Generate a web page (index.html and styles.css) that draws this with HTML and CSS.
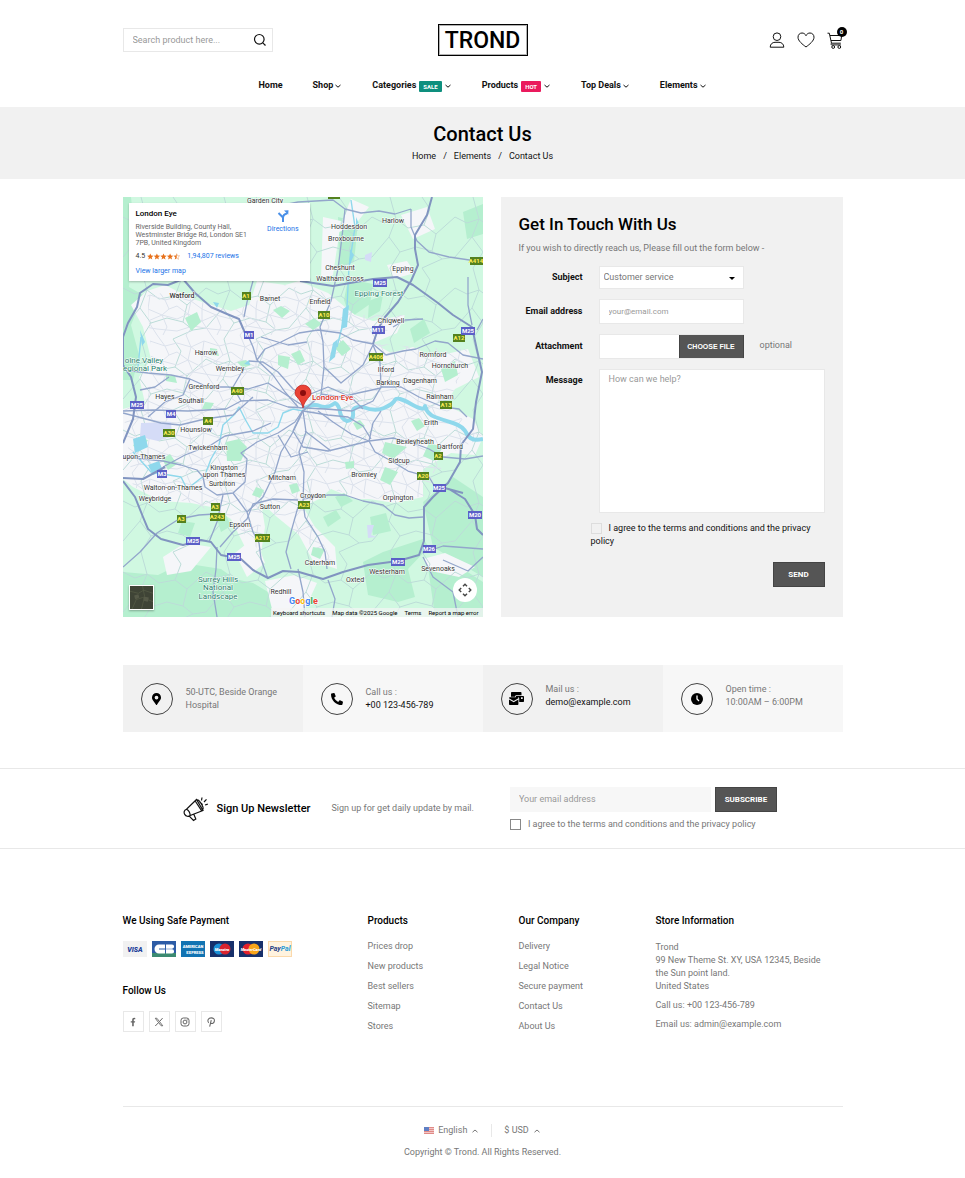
FILE: index.html
```html
<!DOCTYPE html>
<html lang="en">
<head>
    <meta charset="UTF-8">
    <meta name="viewport" content="width=device-width, initial-scale=1.0">
    <title>Contact Us - Trond</title>
    <link rel="stylesheet" href="styles.css">
</head>
<body>
    <!-- shared icons -->
    <svg class="sprite" aria-hidden="true">
        <symbol id="down" viewBox="0 0 8 8"><path d="M1.5 3 4 5.2 6.5 3" fill="none" stroke="currentColor" stroke-width="1"/></symbol>
        <symbol id="up" viewBox="0 0 8 8"><path d="M1.5 5.2 4 3l2.500 2.200" fill="none" stroke="currentColor" stroke-width="1"/></symbol>
    </svg>

    <header class="header">
        <div class="container header-top">
            <form class="search">
                <input type="text" placeholder="Search product here..." aria-label="Search">
                <button type="button" aria-label="Search">
                    <svg viewBox="0 0 14 14" width="14" height="14"><circle cx="6.300" cy="6.300" r="4.800"/><path d="m9.800 9.800 2.700 2.700"/></svg>
                </button>
            </form>
            <a class="logo" href="#">TROND</a>
            <div class="header-icons">
                <a href="#" aria-label="Account">
                    <svg viewBox="0 0 16 16" width="16" height="16"><circle cx="8" cy="4.700" r="3.800"/><path d="M1.200 15.200c0-3.200 2.300-4.900 4.800-4.900h4c2.500 0 4.800 1.700 4.800 4.900z"/></svg>
                </a>
                <a href="#" aria-label="Wishlist">
                    <svg viewBox="0 0 18 16" width="18" height="16"><path d="M9 15C5.500 12.300 1 9 1 5.200 1 2.700 2.800 1 5 1c1.800 0 3.200 1 4 2.700C9.800 2 11.200 1 13 1c2.200 0 4 1.700 4 4.200C17 9 12.500 12.300 9 15z"/></svg>
                </a>
                <a class="cart" href="#" aria-label="Cart">
                    <svg viewBox="0 0 16 17" width="16" height="17"><path d="M.5 1.200h1.800l2.200 10h9.300M3 3.500h11.700l-.8 5H4M4.600 11.200c-1 .6-.7 1.700.2 1.700h9"/><circle cx="6.200" cy="15" r="1.400"/><circle cx="12.300" cy="15" r="1.400"/></svg>
                    <span class="cart-count">0</span>
                </a>
            </div>
        </div>
        <nav class="nav">
            <a href="#">Home</a>
            <a href="#">Shop <svg><use href="#down"/></svg></a>
            <a href="#">Categories <span class="tag sale">SALE</span> <svg><use href="#down"/></svg></a>
            <a href="#">Products <span class="tag hot">HOT</span> <svg><use href="#down"/></svg></a>
            <a href="#">Top Deals <svg><use href="#down"/></svg></a>
            <a href="#">Elements <svg><use href="#down"/></svg></a>
        </nav>
    </header>

    <section class="banner">
        <h1>Contact Us</h1>
        <div class="breadcrumb">
            <a href="#">Home</a><span>/</span><a href="#">Elements</a><span>/</span><span>Contact Us</span>
        </div>
    </section>

    <main class="container">
        <div class="contact">
            <div class="map">
                <svg class="map-canvas" viewBox="0 0 360 420" preserveAspectRatio="xMidYMid slice" role="img" aria-label="Map of London">
                    <defs>
                        <pattern id="streets" width="54" height="46" patternUnits="userSpaceOnUse">
                            <path d="M0 8 14 12 27 6 42 11 54 8M0 30 11 25 25 32 39 26 54 30M9 0 14 12 11 25 16 37 9 46M27 6 25 20 25 32 34 46M42 11 46 20 39 26 44 38 40 46M14 12 25 20 39 26M16 37 25 32M0 42 16 37 34 40 54 42M34 0 42 11M46 20 54 17M0 17 11 25"/>
                        </pattern>
                        <pattern id="lanes" width="83" height="71" patternUnits="userSpaceOnUse">
                            <path d="M0 20 12 26 24 22 36 31 52 28 64 37 83 20M18 0 24 22 17 40 28 55 18 71M52 28 58 12 50 0M64 37 60 54 70 62 50 71M28 55 44 50 60 54M0 60 17 40M70 62 83 60"/>
                        </pattern>
                    </defs>
                    <rect width="360" height="420" fill="#d0f8e1"/>
                    <!-- woodland -->
                    <g fill="#b5efcf">
                        <path d="M0 0h8l3 30-5 60 14 8-12 30 8 30-6 25H0zM225 82l25 5-3 20-20 14-6-18zM215 20l20 5-4 40-15 5z"/>
                        <path d="M0 375 35 378 60 366 98 372 112 382 130 386 150 398 160 420H0zM240 365 260 355 300 342 306 350 285 372 292 400 275 405 245 398zM300 305 330 280 360 300V380L310 350zM305 370 340 372 360 385V420H312zM340 15l20-8v30l-16 5z"/>
                    </g>
                    <!-- built up area -->
                    <path fill="#f5f6f9" d="M24 94 42 88 70 102 108 114 126 108 134 84 162 88 176 84 205 96 222 110 232 118 250 124 282 118 274 136 250 146 268 156 290 150 310 160 345 152 356 180 332 192 322 207 350 222 360 240 352 258 328 256 300 272 300 300 272 306 246 302 232 302 208 292 196 302 180 310 192 330 212 350 214 372 190 364 176 338 154 320 138 305 142 330 138 356 120 370 122 350 108 322 88 310 68 306 38 304 10 290 0 282V212L22 206 16 180 28 162 20 130 8 108z"/>
                    <path fill="#f5f6f9" d="m40 360 22-14 26 4-20 24-24 4zM112 356l20-16 10 26-18 14zM142 384l30-6 22 8-12 26-32 4zM300 362l22-6 30 14-16 10-28-6zM228 2l18 8-14 18-18 8zM278 18l26-8 8 22-22 10zM264 68l20-4 8 12-22 6zM200 20l18 4-8 54-12 4z"/>
                    <rect width="360" height="420" fill="url(#lanes)"/>
                    <path fill="url(#streets)" d="M24 94 70 102 108 114 126 108 162 88 205 96 232 118 282 118 250 146 290 150 345 152 332 192 322 207 360 240 328 256 300 300 246 302 208 292 180 310 214 372 176 338 138 305 138 356 108 322 68 306 10 290 0 212 22 206 28 162z"/>
                    <!-- parks -->
                    <g fill="#b5efcf">
                        <path d="M103 245 116 242 124 250 118 264 104 264zM62 121l12-6 4 10-10 9zM155 158l12 2-2 12-10-4zM150 113l8-4 9 5-8 7zM87 151l7 1 2 7-9-1zM168 157l9-4 5 11-7 4zM39 262l8-5 7 10-9 6zM211 150l9-7 8 9-9 7zM222 265l9-1 0 7-8 1zM262 270l13 5-8 13-10-5zM230 226l7-3 5 6-8 4zM287 132l14-10 6 14-16 10zM246 104l14-6-3 16-12 7zM15 240l10 3-5 9-10-3zM288 224l8-3 6 8-8 5zM200 320l13-7 5 8-13 9zM133 290l8 3-4 8-8-3zM166 288l8-2 3 8-8 3zM114 165l9-2 5 5-8 3zM182 127l9-6 8 6-9 6zM43 178l9 1 2 7-11-2zM82 205l9 1-4 7-8-1zM212 300l9-4 9 8-12 6z"/>
                        <path d="M262 245l22 5-14 12-11-6zM318 172l14-8 3 14-13 7zM306 246l14 4-9 14-11-5zM59 324l13 2-5 14-12-4zM93 319l9-3 6 13-10 6zM190 350l12 2-5 10-9-4zM247 320l16-4 5 18-18 4z"/>
                    </g>
                    <!-- airport and built landmarks -->
                    <path fill="#d5dcf7" d="m18 226 30-1 1 14-14 5-18-4zM242 58l7-3-1 10-6-2zM244 328l7 0-3 10 5 2-8 1z"/>
                    <!-- water -->
                    <g fill="#8fd8ec">
                        <path d="M10 242 22 238 25 250 12 256zM25 268 36 264 40 274 30 278zM220 112 226 108 224 130 218 132zM210 146 215 142 212 160 206 165zM90 105 96 106 94 111zM121 167 126 163 127 168zM17 133l5 12-3 4zM227 52l4 6-5 12zM233 20l3 7-3 4z"/>
                    </g>
                    <path class="water thin" d="M10 255 28 275 58 280 64 292 82 278 88 262 96 248 100 228 112 217 116 210 122 222 130 236 145 236 155 230 160 216 170 212 180 214M228 3 232 30 226 70 224 110 214 150M18 140 15 170"/>
                    <path class="water" d="M180 212Q190 206 197 209T212 206Q216 208 217 215T224 224Q231 223 230 216T240 210Q252 215 261 211T272 203 288 207 302 209Q304 217 312 220T330 226 344 237 360 242"/>
                    <!-- roads -->
                    <g class="road">
                        <path d="M60 70 70 48 95 30 130 14 175 5 210 3 222 12 238 16 256 14 272 17 288 12M222 12 219 40 215 72 208 104 197 130 200 145 201 170 198 198 180 214M288 12 288 30 294 44 306 55 326 60 360 65"/>
                        <path d="M130 84 124 105 121 120M123 134 130 150 134 163 150 178 162 195 175 210M134 163 142 152 158 145 176 136 195 133 217 136 230 143 250 147M126 164 140 165 155 175 170 192 180 198M138 140 165 148 184 145"/>
                        <path d="M0 173 25 176 48 178 67 182 85 190 105 190 125 192 145 186 165 199 182 210M67 182 60 198 42 205 25 220"/>
                        <path d="M0 214 30 213 65 214 103 212 118 204 145 203 165 210 182 211 202 212 229 214 250 204 258 190 257 165 250 148M0 216 38 226 57 228 82 222 110 218 130 200"/>
                        <path d="M250 147 263 158 280 154 293 152 312 144 325 146 340 158 360 162M258 190 278 190 296 200 320 210 336 212 344 220"/>
                        <path d="M0 260 20 262 40 264 58 268 74 273 80 280 82 290 94 298 110 296 122 285 124 262 118 256 134 245 155 236 172 225 180 213M40 270 62 258 88 248 102 239 130 234 148 226"/>
                        <path d="M124 315 110 296M124 315 140 300 152 275 158 255 170 235 180 214M124 315 130 335 136 346 138 362 145 382"/>
                        <path d="M86 345 94 325 100 298M0 370 17 355 34 336 56 322 76 318 92 317M97 350 110 335 124 322 130 307 150 302 175 303"/>
                        <path d="M180 214 183 235 176 255 181 275 180 305 182 320 195 340 202 355 204 372M175 310 168 335 163 355 168 372M180 213 170 234 180 250 205 254 230 248 246 244 250 226 258 214"/>
                        <path d="M195 214 210 225 228 237 246 244 270 241 290 246 306 252 320 260 342 262 360 259M246 244 252 255 270 265 285 274 306 280 312 290M180 302 205 298 222 298 240 304 260 308 272 318 286 321 300 320"/>
                        <path d="M180 214 205 218 225 220 240 229 248 242M182 234 208 254M155 238 168 260 185 255M180 200 205 190 228 200 240 212M201 170 218 186 240 168 250 148M198 197 218 200 235 196 258 191"/>
                        <path d="M345 80 345 108 349 128M360 122 354 133M300 122 282 123 270 130M118 204 110 190 120 173M46 180 32 190 17 193M94 350 93 372 90 395 94 420M175 372 180 395 182 420M205 383 212 402 209 420M300 360 310 380 330 395 335 420M300 356 320 349 360 352M320 363 345 374 360 360"/>
                    </g>
                    <g class="road motorway">
                        <path d="M0 140 5 126 14 110 17 96 30 87 45 88 60 82 72 96 88 110 104 117 116 122 122 136M0 140 0 168 8 180 13 200 10 222 0 246"/>
                        <path d="M0 284 12 300 20 320 25 332 38 342 60 348 78 343 88 345 98 358 118 362 130 373 145 381 160 374 176 375 200 382 220 375 245 368 275 364 296 358 301 344 301 310 310 300 325 286 337 265 338 248 350 232 353 205 359 175 354 153 349 130 330 118 315 106 290 88 274 80 250 82 210 89 177 84"/>
                        <path d="M309 0 304 18 292 38 292 52 295 68 288 84 275 105 262 120 255 132 250 147M326 292 342 302 352 318 354 332 360 338M0 281 20 282 42 270M318 290 340 296"/>
                    </g>
                    <g class="a-road">
                        <rect x="119" y="95" width="9" height="8"/><rect x="195" y="114" width="12" height="8"/><rect x="246" y="156" width="14" height="8"/><rect x="108" y="190" width="13" height="8"/><rect x="347" y="60" width="14" height="8"/><rect x="330" y="137" width="12" height="8"/><rect x="317" y="204" width="12" height="8"/><rect x="80" y="220" width="10" height="8"/><rect x="40" y="232" width="12" height="8"/><rect x="88" y="306" width="9" height="8"/><rect x="87" y="316" width="15" height="8"/><rect x="54" y="318" width="9" height="8"/><rect x="132" y="337" width="15" height="8"/><rect x="175" y="304" width="12" height="8"/><rect x="311" y="255" width="9" height="8"/><rect x="294" y="275" width="12" height="8"/><rect x="205" y="-5" width="12" height="7"/>
                    </g>
                    <g class="m-road">
                        <rect x="121" y="134" width="10" height="8"/><rect x="250" y="82" width="14" height="8"/><rect x="249" y="129" width="13" height="8"/><rect x="338" y="130" width="14" height="8"/><rect x="7" y="204" width="14" height="8"/><rect x="43" y="213" width="10" height="8"/><rect x="34" y="273" width="10" height="8"/><rect x="63" y="340" width="14" height="8"/><rect x="104" y="356" width="14" height="8"/><rect x="310" y="287" width="13" height="8"/><rect x="345" y="314" width="14" height="8"/><rect x="300" y="348" width="13" height="8"/><rect x="268" y="361" width="14" height="8"/>
                    </g>
                    <g class="shield-text yellow">
                        <text x="123" y="101">A1</text><text x="201" y="120">A10</text><text x="253" y="162">A406</text><text x="114" y="196">A40</text><text x="353" y="66">A414</text><text x="336" y="143">A12</text><text x="323" y="210">A13</text><text x="85" y="226">A4</text><text x="46" y="238">A30</text><text x="92" y="312">A3</text><text x="94" y="322">A243</text><text x="58" y="324">A3</text><text x="139" y="343">A217</text><text x="181" y="310">A23</text><text x="315" y="261">A2</text><text x="300" y="281">A20</text>
                    </g>
                    <g class="shield-text">
                        <text x="126" y="140">M1</text><text x="257" y="88">M25</text><text x="255" y="135">M11</text><text x="345" y="136">M25</text><text x="14" y="210">M25</text><text x="48" y="219">M4</text><text x="39" y="279">M3</text><text x="70" y="346">M25</text><text x="111" y="362">M25</text><text x="316" y="293">M25</text><text x="352" y="320">M20</text><text x="306" y="354">M26</text><text x="275" y="367">M25</text>
                    </g>
                    <g class="place">
                        <text x="142" y="6">Garden City</text><text x="226" y="32">Hoddesdon</text><text x="270" y="26">Harlow</text><text x="223" y="44">Broxbourne</text><text x="217" y="73">Cheshunt</text><text x="280" y="74">Epping</text><text x="217" y="84">Waltham Cross</text><text class="town" x="59" y="101">Watford</text><text x="147" y="104">Barnet</text><text x="197" y="107">Enfield</text><text x="268" y="126">Chigwell</text><text x="83" y="158">Harrow</text><text x="107" y="174">Wembley</text><text x="310" y="160">Romford</text><text x="327" y="171">Hornchurch</text><text x="263" y="175">Ilford</text><text x="265" y="188">Barking</text><text x="297" y="186">Dagenham</text><text x="317" y="202">Rainham</text><text x="81" y="192">Greenford</text><text x="42" y="202">Hayes</text><text x="68" y="206">Southall</text><text x="308" y="228">Erith</text><text x="73" y="235">Hounslow</text><text x="292" y="247">Bexleyheath</text><text x="327" y="252">Dartford</text><text x="85" y="253">Twickenham</text><text x="21" y="262">upon-Thames</text><text x="276" y="266">Sidcup</text><text x="101" y="273">Kingston</text><text x="101" y="280">upon Thames</text><text x="99" y="289">Surbiton</text><text x="159" y="283">Mitcham</text><text x="241" y="280">Bromley</text><text x="50" y="293">Walton-on-Thames</text><text x="32" y="304">Weybridge</text><text x="190" y="301">Croydon</text><text x="275" y="303">Orpington</text><text x="147" y="312">Sutton</text><text x="117" y="330">Epsom</text><text x="197" y="368">Caterham</text><text x="264" y="377">Westerham</text><text x="315" y="374">Sevenoaks</text><text x="232" y="385">Oxted</text><text x="158" y="397">Redhill</text>
                    </g>
                    <g class="place nature">
                        <text x="256" y="99">Epping Forest</text><text x="21" y="166">olne Valley</text><text x="22" y="174">egional Park</text><text x="95" y="385">Surrey Hills</text><text x="95" y="393">National</text><text x="95" y="402">Landscape</text>
                    </g>
                    <!-- marker -->
                    <path fill="#ea4335" stroke="#b31412" stroke-width=".6" d="M180 211c-1-5-3-7-5-10-2-2-3-3-3-5a8 8 0 0 1 16 0c0 2-1 3-3 5-2 3-4 5-5 10z"/>
                    <circle cx="180" cy="196" r="3" fill="#8c0d0d"/>
                    <text class="marker-label" x="189" y="203">London Eye</text>
                    <text class="google" x="166" y="407"><tspan fill="#4285f4">G</tspan><tspan fill="#ea4335">o</tspan><tspan fill="#fbbc05">o</tspan><tspan fill="#4285f4">g</tspan><tspan fill="#34a853">l</tspan><tspan fill="#ea4335">e</tspan></text>
                </svg>

                <div class="place-card">
                    <div>
                        <h2>London Eye</h2>
                        <address>Riverside Building, County Hall, Westminster Bridge Rd, London SE1 7PB, United Kingdom</address>
                        <div class="rating">
                            <span>4.5</span>
                            <svg viewBox="0 0 35 7" width="33" height="7" fill="#e7711b" aria-hidden="true"><path d="m3.500.2 1 2.300 2.400.2L5 4.300l.6 2.500-2.100-1.400-2.100 1.400L2 4.300.1 2.700l2.400-.2zM10.500.2l1 2.300 2.400.2L12 4.300l.6 2.500-2.100-1.400-2.100 1.400.6-2.500-1.900-1.600 2.400-.2zM17.500.2l1 2.300 2.400.2L19 4.300l.6 2.500-2.100-1.400-2.100 1.400.6-2.500-1.900-1.600 2.400-.2zM24.500.2l1 2.300 2.400.2L26 4.300l.6 2.500-2.100-1.400-2.100 1.400.6-2.500-1.900-1.600 2.400-.2zM31.500.2v5.200l-2.100 1.400.6-2.500-1.900-1.600 2.400-.2z"/><path fill="none" stroke="#e7711b" stroke-width=".4" d="m31.500.4.9 2.200 2.200.2-1.700 1.500.5 2.200-1.900-1.200"/></svg>
                            <a href="#">1,94,807 reviews</a>
                        </div>
                        <a href="#">View larger map</a>
                    </div>
                    <a class="directions" href="#">
                        <svg viewBox="0 0 12 12" width="12" height="12"><path fill="none" stroke="#4a90e8" stroke-width="2" d="M6 12V7.500L1.500 3M6 8c0-2.500 1-4 4-4.500"/><path fill="#4a90e8" d="m7 .5 4.500-.3-.3 4.600z"/></svg>
                        Directions
                    </a>
                </div>
                <button class="satellite" type="button" aria-label="Satellite view">
                    <svg viewBox="0 0 22 22" width="23" height="23"><path fill="#3f4436" d="M0 0h22v22H0z"/><path fill="none" stroke="#5a6048" stroke-width=".6" d="m0 5 8 2 5-3 9 3M2 22l4-9 6-2 10 4M12 0l2 10-3 12"/><path fill="#565a48" d="m4 9 4-1 1 3-4 2zM13 10l5 1-1 4-4-1z"/></svg>
                </button>
                <button class="map-move" type="button" aria-label="Map camera controls">
                    <svg viewBox="0 0 16 16" width="16" height="16"><path d="M6 4.200 8 2.200l2 2M6 11.800l2 2 2-2M4.200 6l-2 2 2 2M11.800 6l2 2-2 2"/></svg>
                </button>
                <div class="map-terms"><span>Keyboard shortcuts</span><span>Map data ©2025 Google</span><span>Terms</span><span>Report a map error</span></div>
            </div>

            <form class="contact-form">
                <h2>Get In Touch With Us</h2>
                <p>If you wish to directly reach us, Please fill out the form below -</p>
                <div class="form-row">
                    <label for="subject">Subject</label>
                    <div class="select">
                        <select id="subject">
                            <option>Customer service</option>
                            <option>Webmaster</option>
                        </select>
                    </div>
                </div>
                <div class="form-row">
                    <label for="email">Email address</label>
                    <input class="field" id="email" type="email" placeholder="your@email.com">
                </div>
                <div class="form-row">
                    <label for="file">Attachment</label>
                    <input class="field file" id="file" type="file">
                    <span class="optional">optional</span>
                </div>
                <div class="form-row message">
                    <label for="message">Message</label>
                    <textarea class="field" id="message" placeholder="How can we help?"></textarea>
                </div>
                <label class="agree"><input type="checkbox">I agree to the terms and conditions and the privacy policy</label>
                <button class="btn" type="button">SEND</button>
            </form>
        </div>

        <div class="info">
            <div class="info-item">
                <span class="circle"><svg viewBox="0 0 384 512" width="9" height="12"><path d="M172 502C27 291 0 270 0 192a192 192 0 0 1 384 0c0 78-27 99-172 310a24 24 0 0 1-40 0zm20-230a80 80 0 1 0 0-160 80 80 0 0 0 0 160z"/></svg></span>
                <p>50-UTC, Beside Orange Hospital</p>
            </div>
            <div class="info-item">
                <span class="circle"><svg viewBox="0 0 512 512" width="12" height="12"><path d="M493 25 389 1c-11-3-23 3-27 14l-48 112c-4 10-2 22 7 29l61 49a371 371 0 0 1-177 177l-49-61c-7-9-19-12-29-7L15 362c-11 4-17 16-14 27l24 104c2 11 12 19 23 19 256 0 464-208 464-464 0-11-8-21-19-23z" transform="matrix(-1 0 0 1 512 0)"/></svg></span>
                <p>Call us :<br><a href="#">+00 123-456-789</a></p>
            </div>
            <div class="info-item raised">
                <span class="circle"><svg viewBox="0 0 15 13" width="15" height="13"><path d="M3 0h8.500c.6 0 1 .4 1 1v2.200H7.500c-1 0-1.500.6-1.500 1.500H2V1c0-.6.4-1 1-1z"/><path d="M7.500 4h6.700c.4 0 .8.400.8.800V9c0 .6-.4 1-.8 1h-4V6.500c0-.8-.5-1.300-1.200-1.300H6.800c0-.7.2-1.200.7-1.200zm4.500 1.300V7h1.700V5.300zM0 6.300C0 5.600.4 5.300 1 5.300h7.500c.5 0 .9.400.9 1L4.700 9z"/><path d="m0 7.500 4.700 2.700L9.400 7.500V12c0 .6-.4 1-1 1H1c-.6 0-1-.4-1-1z"/></svg></span>
                <p>Mail us :<br><a href="#">demo@example.com</a></p>
            </div>
            <div class="info-item raised">
                <span class="circle"><svg viewBox="0 0 12 12" width="12" height="12"><circle cx="6" cy="6" r="6"/><path d="M6 2.500V6l2 2" fill="none" stroke="#fff" stroke-width="1.300"/></svg></span>
                <p>Open time :<br>10:00AM – 6:00PM</p>
            </div>
        </div>
    </main>

    <section class="newsletter">
        <div class="container newsletter-inner">
            <svg viewBox="0 0 26 26" width="26" height="26" aria-hidden="true"><path d="M13.500 3.500 3.500 13.200c-2.500 1-3 3.300-1.800 5.200 1.300 2 3.500 2.500 5.500 1.100L20 14.500zM12.200 5l6.500 9.800M14 4.200c1-.8 2.300.5 3.700 2.600 1.600 2.300 3.200 5.500 2 6.800M3.500 13.200c2 .9 3.500 3 3.700 6.300M16.500 6.500c2 0 3.500 2 2.600 4M6 19.800l4.500 4.700 2.300-1.500-2-4.800"/><path d="M18.500 4.500 19 1.500M21 6l2.500-2.700M22 9l2.800-.8"/></svg>
            <h2>Sign Up Newsletter</h2>
            <p>Sign up for get daily update by mail.</p>
            <form>
                <div class="subscribe">
                    <input type="email" placeholder="Your email address" aria-label="Your email address">
                    <button class="btn" type="button">SUBSCRIBE</button>
                </div>
                <label class="agree"><input type="checkbox">I agree to the terms and conditions and the privacy policy</label>
            </form>
        </div>
    </section>

    <footer class="container footer">
        <div class="footer-columns">
            <div class="footer-pay">
                <h3>We Using Safe Payment</h3>
                <div class="cards">
                    <svg viewBox="0 0 24 16"><rect width="24" height="16" fill="#f1f1f1"/><text x="12" y="11" fill="#21409a">VISA</text></svg>
                    <svg viewBox="0 0 24 16"><rect width="24" height="16" fill="#2d5ca6"/><path fill="#3c8a72" d="M0 12h24v4H0z"/><path fill="#fff" d="M13 3.500v9H7a4.500 4.500 0 0 1 0-9zM14 3.500h6a2 2 0 0 1 0 4.200h-6zM14 8.300h6a2 2 0 0 1 0 4.200h-6z"/><path stroke="#2d5ca6" d="M7 8h6"/></svg>
                    <svg viewBox="0 0 24 16"><rect width="24" height="16" fill="#1173b2"/><text class="amex" x="12" y="7">AMERICAN</text><text class="amex" x="14" y="13">EXPRESS</text></svg>
                    <svg viewBox="0 0 24 16"><rect width="24" height="16" fill="#17306b"/><circle cx="9" cy="8" r="5.500" fill="#1a8fd6"/><circle cx="15" cy="8" r="5.500" fill="#d8232f"/><text class="mini" x="12" y="10">Maestro</text></svg>
                    <svg viewBox="0 0 24 16"><rect width="24" height="16" fill="#17306b"/><circle cx="9" cy="8" r="5.500" fill="#e3202c"/><circle cx="15" cy="8" r="5.500" fill="#f9a61a"/><text class="mini" x="12" y="10">MasterCard</text></svg>
                    <svg viewBox="0 0 24 16"><rect x=".5" y=".5" width="23" height="15" fill="#fff3df" stroke="#fbd9ab"/><text class="paypal" x="12" y="10" fill="#1f3f86">Pay<tspan fill="#2a9bd7">Pal</tspan></text></svg>
                </div>
                <h3>Follow Us</h3>
                <div class="social">
                    <a href="#" aria-label="Facebook"><svg viewBox="0 0 12 12"><path d="M5 11V6.700H3.300V5H5V3.600C5 1.900 6 1 7.400 1l1.300.1v1.500h-.8c-.8 0-1 .4-1 1V5h1.700l-.3 1.700H6.900V11z"/></svg></a>
                    <a href="#" aria-label="X"><svg viewBox="0 0 12 12"><path fill="none" stroke="#666" stroke-width="1.100" d="M1.500 1.500h2l7 9h-2z"/><path fill="none" stroke="#666" stroke-width="1.200" d="M10.300 1.300 6.800 5.300M5.200 7l-3.700 3.800"/></svg></a>
                    <a href="#" aria-label="Instagram"><svg viewBox="0 0 12 12"><g fill="none" stroke="#666" stroke-width="1.200"><rect x="1.200" y="1.200" width="9.600" height="9.600" rx="2.800"/><circle cx="6" cy="6" r="2.300"/></g><circle cx="8.600" cy="3.400" r=".7"/></svg></a>
                    <a href="#" aria-label="Pinterest"><svg viewBox="0 0 12 12"><path fill="none" stroke="#666" stroke-width="1.300" d="M3.200 7C.8 4.300 3 1 6.200 1c2.600 0 4.200 1.600 3.900 3.600C9.800 8 6 8.800 5.400 6.600M6.300 3.800 4.400 11.500"/></svg></a>
                </div>
            </div>
            <div>
                <h3>Products</h3>
                <ul>
                    <li><a href="#">Prices drop</a></li>
                    <li><a href="#">New products</a></li>
                    <li><a href="#">Best sellers</a></li>
                    <li><a href="#">Sitemap</a></li>
                    <li><a href="#">Stores</a></li>
                </ul>
            </div>
            <div>
                <h3>Our Company</h3>
                <ul>
                    <li><a href="#">Delivery</a></li>
                    <li><a href="#">Legal Notice</a></li>
                    <li><a href="#">Secure payment</a></li>
                    <li><a href="#">Contact Us</a></li>
                    <li><a href="#">About Us</a></li>
                </ul>
            </div>
            <div class="store">
                <h3>Store Information</h3>
                <p>Trond<br>99 New Theme St. XY, USA 12345, Beside the Sun point land.<br>United States</p>
                <p>Call us: <a href="#">+00 123-456-789</a></p>
                <p>Email us: <a href="#">admin@example.com</a></p>
            </div>
        </div>
        <div class="footer-bottom">
            <div class="switchers">
                <button type="button">
                    <svg class="flag" viewBox="0 0 10 7"><path fill="#f3c6c6" d="M0 0h10v7H0z"/><path stroke="#e08a86" d="M0 .5h10M0 2.500h10M0 4.500h10M0 6.500h10"/><path fill="#5f7fc4" d="M0 0h5v4H0z"/></svg>
                    English <svg><use href="#up"/></svg>
                </button>
                <button type="button">$ USD <svg><use href="#up"/></svg></button>
            </div>
            <p>Copyright © Trond. All Rights Reserved.</p>
        </div>
    </footer>
</body>
</html>
```

FILE: styles.css
```css
* {
    margin: 0;
    padding: 0;
    box-sizing: border-box;
}

body {
    font-family: Roboto, "Liberation Sans", sans-serif;
    font-size: 9px;
    line-height: 13px;
    color: #777;
    background: #fff;
}

a {
    color: inherit;
    text-decoration: none;
}

ul {
    list-style: none;
}

input,
select,
textarea,
button {
    font: inherit;
    color: inherit;
    border: none;
    border-radius: 0;
    outline: none;
}

button {
    background: none;
    cursor: pointer;
}

::placeholder {
    color: #999;
    opacity: 1;
}

h1,
h2,
h3 {
    font-weight: 500;
    color: #000;
}

.sprite {
    display: none;
}

.container {
    width: 100%;
    max-width: 720px;
    margin: 0 auto;
}

.btn {
    height: 25px;
    background: #555;
    border: 1px solid #444;
    color: #fff;
    font-size: 8px;
    font-weight: 700;
}

/* Header */
.header {
    padding-top: 24px;
    height: 107px;
}

.header-top {
    display: grid;
    grid-template-columns: 1fr auto 1fr;
    align-items: center;
}

.search {
    display: flex;
    width: 150px;
    height: 24px;
    border: 1px solid #e8e8e8;
}

.search input {
    flex: 1;
    min-width: 0;
    padding-left: 9px;
}

.search button {
    display: flex;
    align-items: center;
    padding: 0 5px;
}

.search svg,
.header-icons svg,
.newsletter-inner > svg {
    fill: none;
    stroke: #111;
    stroke-width: 1.2;
}

.logo {
    width: 90px;
    height: 32px;
    border: 1px solid #000;
    outline: 1px solid rgba(0, 0, 0, 0.3);
    outline-offset: -2px;
    color: #000;
    font-size: 23px;
    font-weight: 500;
    line-height: 31px;
    text-align: center;
}

.header-icons {
    display: flex;
    justify-content: flex-end;
    align-items: center;
    gap: 12px;
}

.header-icons svg {
    display: block;
    stroke-width: 1;
}

.cart {
    position: relative;
}

.cart-count {
    position: absolute;
    top: -5px;
    right: -4px;
    width: 10px;
    height: 10px;
    border-radius: 50%;
    background: #000;
    color: #fff;
    font-size: 6px;
    font-weight: 700;
    line-height: 10px;
    text-align: center;
}

.nav {
    display: flex;
    justify-content: center;
    gap: 30px;
    margin-top: 23px;
    color: #111;
    font-weight: 700;
}

.nav a {
    display: flex;
    align-items: center;
}

.nav svg,
.switchers svg {
    width: 8px;
    height: 8px;
}

.nav svg {
    margin-left: 1px;
}

.tag {
    margin: 1px 1px 0 3px;
    padding: 0 4px;
    border-radius: 1px;
    color: #fff;
    font-size: 6px;
    line-height: 11px;
}

.sale {
    background: #0e8f7e;
}

.hot {
    background: #ea1a5d;
}

/* Title banner */
.banner {
    padding: 15px 0 16px;
    background: #f1f1f1;
    color: #111;
    text-align: center;
}

.banner h1 {
    font-size: 20px;
    line-height: 24px;
}

.breadcrumb {
    display: flex;
    justify-content: center;
    gap: 7px;
    margin-top: 4px;
}

/* Map and form */
.contact {
    display: grid;
    grid-template-columns: 360fr 342fr;
    gap: 18px;
    margin-top: 18px;
}

.map {
    position: relative;
    min-height: 420px;
    overflow: hidden;
}

.map-canvas {
    position: absolute;
    inset: 0;
    width: 100%;
    height: 100%;
}

#streets path,
#lanes path {
    fill: none;
    stroke: #dce2ec;
    stroke-width: 1;
}

#lanes path {
    stroke: #bcdcd8;
}

.road {
    fill: none;
    stroke: #93a6cb;
    stroke-width: 1.3;
    stroke-linejoin: round;
}

.motorway {
    stroke: #8194c0;
    stroke-width: 2;
}

.water {
    fill: none;
    stroke: #8fd8ec;
    stroke-width: 4;
    stroke-linejoin: round;
}

.water.thin {
    stroke-width: 1.4;
}

.a-road {
    fill: #54821f;
}

.m-road {
    fill: #5b5fc7;
}

.shield-text {
    fill: #fff;
    font-size: 6px;
    font-weight: 700;
    text-anchor: middle;
}

.yellow {
    fill: #ffee58;
}

.place {
    fill: #333;
    stroke: #fff;
    stroke-width: 1;
    paint-order: stroke;
    font-size: 7px;
    text-anchor: middle;
}

.town {
    font-weight: 500;
}

.nature {
    fill: #27806a;
    font-size: 8px;
}

.marker-label {
    fill: #d93025;
    stroke: #fff;
    stroke-width: 1;
    paint-order: stroke;
    font-size: 8px;
    font-weight: 500;
}

.google {
    stroke: #fff;
    stroke-width: 1;
    paint-order: stroke;
    font-size: 9px;
    font-weight: 700;
}

.place-card {
    position: absolute;
    top: 6px;
    left: 6px;
    display: flex;
    justify-content: space-between;
    width: 181px;
    height: 78px;
    padding: 4px 11px 0 7px;
    background: #fff;
    box-shadow: 0 1px 2px rgba(0, 0, 0, 0.25);
    font-size: 7px;
    line-height: 8px;
}

.place-card > div {
    width: 120px;
}

.place-card h2 {
    font-size: 8px;
    line-height: 13px;
}

.place-card address {
    margin-top: 3px;
    color: #666;
    font-style: normal;
}

.place-card a {
    color: #1a73e8;
}

.rating {
    display: flex;
    align-items: center;
    gap: 2px;
    margin: 5px 0 7px;
    color: #333;
}

.rating a {
    margin-left: 5px;
}

.directions {
    display: flex;
    flex-direction: column;
    align-items: center;
    gap: 3px;
    padding-top: 3px;
}

.satellite {
    position: absolute;
    bottom: 7px;
    left: 6px;
    width: 25px;
    height: 25px;
    border: 1px solid #fff;
    background: #3f4436;
    box-shadow: 0 1px 2px rgba(0, 0, 0, 0.3);
}

.satellite svg {
    display: block;
}

.map-move {
    position: absolute;
    right: 6px;
    bottom: 15px;
    display: flex;
    align-items: center;
    justify-content: center;
    width: 24px;
    height: 24px;
    border-radius: 50%;
    background: #fff;
}

.map-move path {
    fill: none;
    stroke: #444;
    stroke-width: 1.4;
}

.map-terms {
    position: absolute;
    right: 0;
    bottom: 0;
    display: flex;
    gap: 7px;
    padding: 0 4px 0 2px;
    background: rgba(245, 245, 245, 0.7);
    color: #000;
    font-size: 6px;
    line-height: 9px;
}

.contact-form {
    display: flex;
    flex-direction: column;
    gap: 10px;
    padding: 15px 18px 30px;
    background: #f1f1f1;
}

.contact-form h2 {
    font-size: 17px;
    line-height: 24px;
}

.contact-form p {
    margin: -4px 0 1px;
}

.form-row {
    display: grid;
    grid-template-columns: 64px 145px 1fr;
    column-gap: 16px;
    align-items: center;
}

.form-row label {
    color: #111;
    font-weight: 700;
    text-align: right;
    white-space: nowrap;
}

.select {
    position: relative;
}

.select::after {
    content: "";
    position: absolute;
    top: 11px;
    right: 9px;
    border: 3px solid transparent;
    border-top-color: #000;
}

.select select {
    display: block;
    width: 100%;
    height: 23px;
    padding: 0 4px 1px;
    border: 1px solid #e8e8e8;
    background: #fff;
    appearance: none;
}

.field {
    width: 100%;
    height: 25px;
    padding: 0 9px;
    border: 1px solid #e8e8e8;
    background: #fff;
}

input.field {
    font-size: 8px;
}

.file {
    padding: 0;
    color: transparent;
    direction: rtl;
    border-right: none;
}

.file::file-selector-button {
    width: 65px;
    height: 25px;
    margin: -1px 0 0 4px;
    border: 1px solid #444;
    background: #555;
    color: #fff;
    font-size: 7px;
    font-weight: 700;
    text-transform: uppercase;
}

.optional {
    padding-bottom: 3px;
}

.message {
    grid-template-columns: 64px 1fr;
    align-items: start;
}

.message label {
    padding-top: 5px;
}

.message textarea {
    display: block;
    height: 144px;
    padding-top: 3px;
    resize: none;
}

.agree input {
    width: 11px;
    height: 11px;
    margin-right: 7px;
    border: 1px solid #888;
    vertical-align: -3px;
    appearance: none;
}

.agree input:checked {
    background: #555;
}

.contact-form .agree {
    margin: -1px 0 0 72px;
    color: #111;
}

.contact-form .agree input {
    border-color: #ddd;
}

.contact-form .btn {
    width: 52px;
    margin-top: 4px;
    align-self: flex-end;
}

/* Info boxes */
.info {
    display: grid;
    grid-template-columns: repeat(4, 1fr);
    margin: 48px 0 36px;
}

.info-item {
    display: flex;
    align-items: center;
    gap: 13px;
    height: 67px;
    padding: 0 18px;
    background: #f1f1f1;
}

.info-item:nth-child(even) {
    background: #f7f7f7;
}

.raised p {
    padding-bottom: 6px;
}

.info a {
    color: #111;
}

.circle {
    display: flex;
    flex: none;
    align-items: center;
    justify-content: center;
    width: 32px;
    height: 32px;
    border: 1px solid #444;
    border-radius: 50%;
}

/* Newsletter */
.newsletter {
    border-top: 1px solid #e8e8e8;
    border-bottom: 1px solid #e8e8e8;
}

.newsletter-inner {
    display: flex;
    align-items: center;
    height: 79px;
    padding-left: 60px;
}

.newsletter h2 {
    margin: 0 21px 0 8px;
    font-size: 11px;
}

.newsletter form {
    margin-left: 36px;
}

.subscribe {
    display: flex;
    gap: 4px;
    margin-bottom: 6px;
}

.subscribe input {
    width: 201px;
    height: 25px;
    padding: 0 9px;
    background: #f7f7f7;
}

.subscribe .btn {
    width: 62px;
}

/* Footer */
.footer-columns {
    display: grid;
    grid-template-columns: 245fr 151fr 137fr 187fr;
    padding: 65px 0 69px;
}

.footer h3 {
    font-size: 10px;
    line-height: 13px;
}

.footer li {
    line-height: 20px;
}

.footer ul {
    padding-top: 9px;
}

.cards {
    display: flex;
    gap: 5px;
    margin: 14px 0 27px;
}

.cards svg {
    width: 24px;
    height: 16px;
}

.cards text {
    font-size: 7px;
    font-style: italic;
    font-weight: 900;
    text-anchor: middle;
}

.cards .amex {
    fill: #fff;
    font-size: 4px;
    font-style: normal;
}

.cards .mini {
    fill: #fff;
    font-size: 4px;
}

.cards .paypal {
    font-size: 7px;
    font-weight: 700;
}

.social {
    display: flex;
    gap: 5px;
    margin-top: 14px;
}

.social a {
    display: flex;
    align-items: center;
    justify-content: center;
    width: 21px;
    height: 21px;
    border: 1px solid #e8e8e8;
}

.social svg {
    width: 10px;
    height: 10px;
    fill: #666;
}

.store h3 {
    margin-bottom: 14px;
}

.store p {
    margin-bottom: 6px;
    padding-right: 10px;
}

.footer-bottom {
    padding: 17px 0 20px;
    border-top: 1px solid #e8e8e8;
    text-align: center;
}

.switchers {
    display: flex;
    justify-content: center;
    margin-bottom: 9px;
}

.switchers button {
    display: flex;
    align-items: center;
    gap: 4px;
    padding: 0 12px;
}

.switchers button + button {
    border-left: 1px solid #e8e8e8;
}

.switchers .flag {
    width: 10px;
    height: 7px;
}
```
